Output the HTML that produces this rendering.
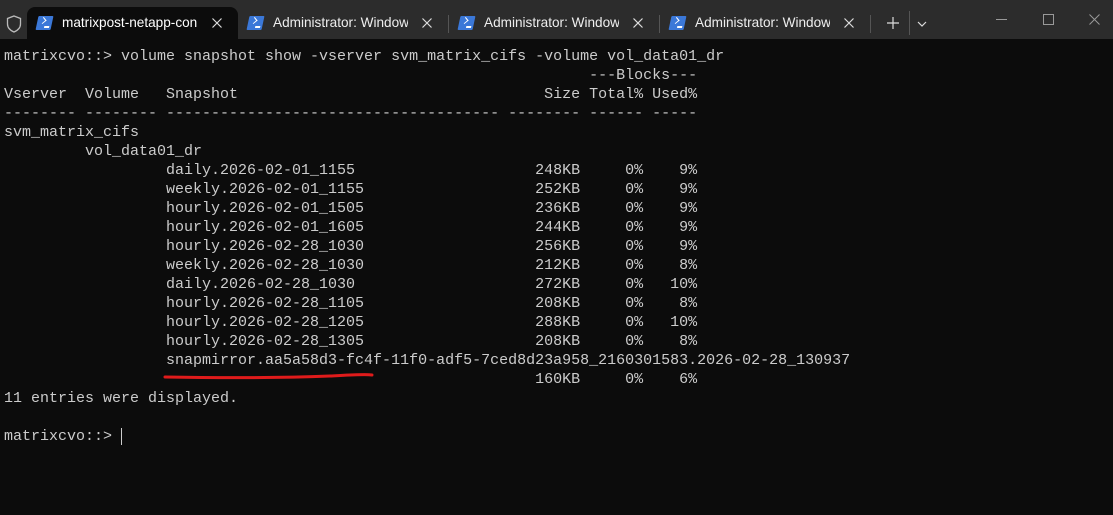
<!DOCTYPE html>
<html><head><style>
body{margin:0;width:1113px;height:515px;background:#0c0c0c;overflow:hidden;font-family:"Liberation Sans",sans-serif;position:relative}
.bar{position:absolute;left:0;top:0;width:1113px;height:39px;background:#2c2c2c}
.tab{position:absolute;top:7px;height:32px}
.active{left:27px;width:211px;background:#0c0c0c;border-radius:8px 8px 0 0}
.ic{position:absolute;top:16px;width:15px;height:14px;background:#3b78d8;transform:skewX(-12deg);border-radius:1px}
.ic:after{content:"";position:absolute;left:3px;top:2px;width:4px;height:4px;border-right:1.5px solid #fff;border-bottom:1.5px solid #fff;transform:rotate(-45deg)}
.ic:before{content:"";position:absolute;left:8px;top:10px;width:5px;height:1.5px;background:#fff}
.t{position:absolute;top:15px;font-size:13.6px;color:#fff;white-space:nowrap;overflow:hidden}
.x{position:absolute;top:18px}
.sep{position:absolute;top:15px;width:1px;height:18px;background:#555}
pre{position:absolute;left:4px;top:47px;margin:0;font-family:"Liberation Mono",monospace;font-size:15px;line-height:19px;color:#cccccc;letter-spacing:0}
</style></head><body>
<div class="bar"></div>
<svg style="position:absolute;left:6px;top:15px" width="16" height="18" viewBox="0 0 16 18"><path d="M8 1 L14.5 3.5 V9 C14.5 13 11.5 15.5 8 17 C4.5 15.5 1.5 13 1.5 9 V3.5 Z" fill="none" stroke="#bbb" stroke-width="1.3"/></svg>
<div class="tab active"></div>
<div class="ic" style="left:37px"></div><div class="t" style="left:62px;width:135px">matrixpost-netapp-conn</div>
<svg class="x" style="left:212px" width="10" height="10"><path d="M0.5 0.5L9.5 9.5M9.5 0.5L0.5 9.5" stroke="#ddd" stroke-width="1.2"/></svg>
<div class="ic" style="left:248px"></div><div class="t" style="left:273px;width:135px;color:#eee">Administrator: Windows I</div>
<svg class="x" style="left:422px" width="10" height="10"><path d="M0.5 0.5L9.5 9.5M9.5 0.5L0.5 9.5" stroke="#ddd" stroke-width="1.2"/></svg><div class="sep" style="left:448px"></div>
<div class="ic" style="left:459px"></div><div class="t" style="left:484px;width:135px;color:#eee">Administrator: Windows I</div>
<svg class="x" style="left:633px" width="10" height="10"><path d="M0.5 0.5L9.5 9.5M9.5 0.5L0.5 9.5" stroke="#ddd" stroke-width="1.2"/></svg><div class="sep" style="left:659px"></div>
<div class="ic" style="left:670px"></div><div class="t" style="left:695px;width:135px;color:#eee">Administrator: Windows I</div>
<svg class="x" style="left:844px" width="10" height="10"><path d="M0.5 0.5L9.5 9.5M9.5 0.5L0.5 9.5" stroke="#ddd" stroke-width="1.2"/></svg><div class="sep" style="left:870px"></div>
<svg style="position:absolute;left:887px;top:17px" width="12" height="12"><path d="M6 0V12M0 6H12" stroke="#ddd" stroke-width="1.2"/></svg>
<div class="sep" style="left:909px;top:11px;height:24px"></div>
<svg style="position:absolute;left:917px;top:21px" width="10" height="7"><path d="M1 1 L5 5 L9 1" fill="none" stroke="#ddd" stroke-width="1.2"/></svg>
<div style="position:absolute;left:996px;top:19px;width:11px;height:1px;background:#999"></div>
<div style="position:absolute;left:1043px;top:14px;width:9px;height:9px;border:1px solid #999"></div>
<svg style="position:absolute;left:1089px;top:14px" width="11" height="11"><path d="M0.5 0.5 L10.5 10.5 M10.5 0.5 L0.5 10.5" stroke="#999" stroke-width="1"/></svg>
<pre>matrixcvo::&gt; volume snapshot show -vserver svm_matrix_cifs -volume vol_data01_dr
                                                                 ---Blocks---
Vserver  Volume   Snapshot                                  Size Total% Used%
-------- -------- ------------------------------------- -------- ------ -----
svm_matrix_cifs
         vol_data01_dr
                  daily.2026-02-01_1155                    248KB     0%    9%
                  weekly.2026-02-01_1155                   252KB     0%    9%
                  hourly.2026-02-01_1505                   236KB     0%    9%
                  hourly.2026-02-01_1605                   244KB     0%    9%
                  hourly.2026-02-28_1030                   256KB     0%    9%
                  weekly.2026-02-28_1030                   212KB     0%    8%
                  daily.2026-02-28_1030                    272KB     0%   10%
                  hourly.2026-02-28_1105                   208KB     0%    8%
                  hourly.2026-02-28_1205                   288KB     0%   10%
                  hourly.2026-02-28_1305                   208KB     0%    8%
                  snapmirror.aa5a58d3-fc4f-11f0-adf5-7ced8d23a958_2160301583.2026-02-28_130937
                                                           160KB     0%    6%
11 entries were displayed.

matrixcvo::&gt; </pre>
<div style="position:absolute;left:121px;top:428px;width:1px;height:17px;background:#ccc"></div>
<svg style="position:absolute;left:160px;top:370px" width="220" height="12"><path d="M5 7 C60 8 120 8 170 6 C190 5 205 4 212 5" fill="none" stroke="#e01b1b" stroke-width="3" stroke-linecap="round"/></svg>
</body></html>
